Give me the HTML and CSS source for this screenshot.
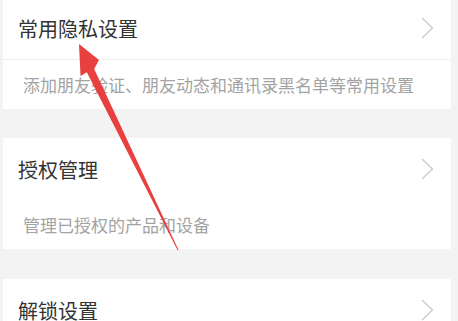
FILE: index.html
```html
<!DOCTYPE html>
<html lang="zh-CN">
<head>
	<meta charset="UTF-8">
	<meta name="viewport" content="width=device-width, initial-scale=1.0">
	<title>隐私设置</title>
	<link rel="stylesheet" href="styles.css">
</head>
<body>
	<div class="page">
		<div class="card first">
			<div class="row-title lined">
				<span>常用隐私设置</span>
				<svg class="chevron" width="13" height="22" viewBox="0 0 13 22"><polyline points="1,1 11.5,11 1,21" fill="none" stroke="#cdcdcd" stroke-width="1.4"/></svg>
			</div>
			<div class="row-desc">添加朋友验证、朋友动态和通讯录黑名单等常用设置</div>
		</div>

		<div class="card">
			<div class="row-title">
				<span>授权管理</span>
				<svg class="chevron" width="13" height="22" viewBox="0 0 13 22"><polyline points="1,1 11.5,11 1,21" fill="none" stroke="#cdcdcd" stroke-width="1.4"/></svg>
			</div>
			<div class="row-desc">管理已授权的产品和设备</div>
		</div>

		<div class="card">
			<div class="row-title">
				<span>解锁设置</span>
				<svg class="chevron" width="13" height="22" viewBox="0 0 13 22"><polyline points="1,1 11.5,11 1,21" fill="none" stroke="#cdcdcd" stroke-width="1.4"/></svg>
			</div>
		</div>
	</div>

	<svg class="arrow" width="458" height="321" viewBox="0 0 458 321">
		<polygon points="79,44 99,60 94.2,69 178.5,250 177.6,250.2 86.8,72.2 80.5,76" fill="#e8403f"/>
	</svg>
</body>
</html>
```

FILE: styles.css
```css
body {
	margin: 0;
	background-color: #f3f3f3;
	font-family: "Noto Sans CJK SC", "Noto Sans", sans-serif;
	overflow: hidden;
}

.page {
	display: flex;
	flex-direction: column;
	gap: 29px;
	padding: 0 7px 0 3px;
}

.card {
	background-color: #fff;
}

.card.first {
	margin-top: -3px;
}

.card + .card + .card {
	margin-top: 1px;
}

.row-title {
	display: flex;
	align-items: center;
	justify-content: space-between;
	height: 62px;
	padding: 0 17px 0 15px;
	font-size: 20px;
	color: #333;
}

.row-title.lined {
	border-bottom: 1px solid #ececec;
}

.row-desc {
	display: flex;
	align-items: center;
	height: 49px;
	padding-left: 20px;
	font-size: 17px;
	color: #a3a3a3;
}

.arrow {
	position: absolute;
	top: 0;
	left: 0;
	pointer-events: none;
}
```
